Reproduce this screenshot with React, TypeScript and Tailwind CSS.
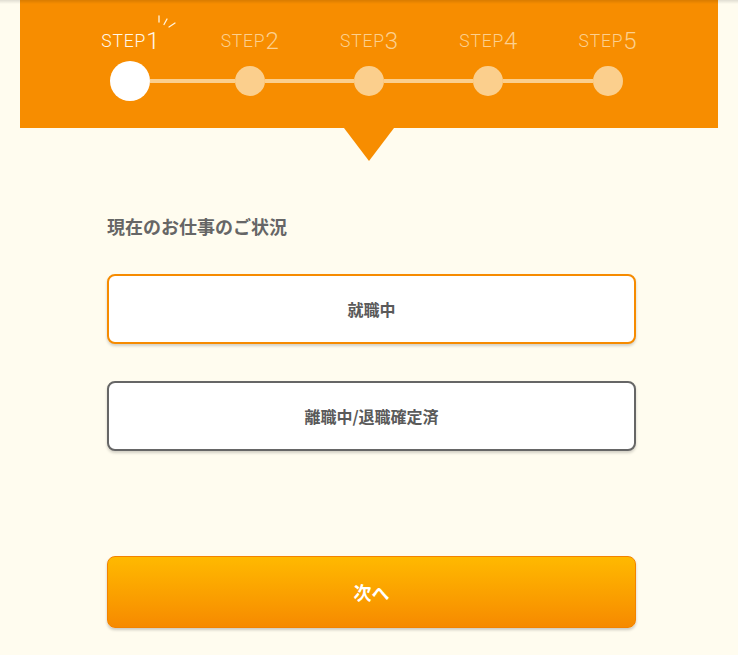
import React from "react";

const steps = [1, 2, 3, 4, 5];

export default function App() {
  return (
    <div className="relative min-h-[655px] w-full bg-[#fffcef]" style={{ fontFamily: '"Noto Sans CJK JP", "Noto Sans", sans-serif' }}>
      <div className="pointer-events-none absolute left-0 right-0 top-0 h-[4px] bg-gradient-to-b from-[rgba(0,0,0,0.12)] to-transparent" />
      <div className="mx-[20px] flex h-[128px] flex-col items-center bg-[#f78d00] pt-[23px]">
        <div className="flex">
          {steps.map((n) => (
            <div key={n} className="flex w-[119.3px] flex-col items-center">
              <div
                className={`relative flex h-[30px] items-end leading-none ${n === 1 ? "text-[#fff8ea]" : "text-[#fcd08f]"}`}
                style={{ fontFamily: 'Roboto, "Open Sans", sans-serif' }}
              >
                <span className="pb-[3px] text-[17.5px] font-light tracking-[0.8px]">STEP</span>
                <span className="text-[24px] font-light">{n}</span>
                {n === 1 && (
                  <svg className="absolute left-full top-[-9px] -ml-[2px]" width="20" height="16" viewBox="0 0 20 16" fill="none" stroke="#fff3dd" strokeWidth="1.3" strokeLinecap="round">
                    <line x1="2" y1="2" x2="2" y2="8" />
                    <line x1="7" y1="10.5" x2="10" y2="5" />
                    <line x1="12" y1="13" x2="18" y2="9" />
                  </svg>
                )}
              </div>
              <div className="mt-[8px] flex h-[40px] w-full items-center">
                <div className={`h-[4px] flex-1 ${n === 1 ? "bg-transparent" : "bg-[#fbcf8d]"}`} />
                {n === 1 ? (
                  <div className="h-[40px] w-[40px] rounded-full bg-white" />
                ) : (
                  <div className="h-[30px] w-[30px] rounded-full bg-[#fbcf8d]" />
                )}
                <div className={`h-[4px] flex-1 ${n === 5 ? "bg-transparent" : "bg-[#fbcf8d]"}`} />
              </div>
            </div>
          ))}
        </div>
      </div>
      <div className="flex justify-center">
        <div className="h-0 w-0 border-l-[25px] border-r-[25px] border-t-[33px] border-l-transparent border-r-transparent border-t-[#f78d00]" />
      </div>
      <div className="ml-[107px] w-[529px] pt-[53px]">
        <div className="text-[18px] font-bold leading-[24px] text-[#666666]">現在のお仕事のご状況</div>
        <div className="mt-[36px] flex h-[70px] items-center justify-center rounded-[8px] border-2 border-[#f68b00] bg-white text-[16px] font-bold text-[#5a5a5a] shadow-[0_2px_3px_rgba(0,0,0,0.18)]">
          就職中
        </div>
        <div className="mt-[37px] flex h-[70px] items-center justify-center rounded-[8px] border-2 border-[#666666] bg-white text-[16px] font-bold text-[#5a5a5a] shadow-[0_2px_3px_rgba(0,0,0,0.18)]">
          離職中/退職確定済
        </div>
        <div className="mt-[105px] flex h-[72px] items-center justify-center rounded-[8px] border-[1.5px] border-[#f38300] bg-gradient-to-b from-[#ffb900] to-[#f68a00] text-[18px] font-bold text-white shadow-[0_2px_3px_rgba(0,0,0,0.2)]">
          次へ
        </div>
      </div>
    </div>
  );
}
